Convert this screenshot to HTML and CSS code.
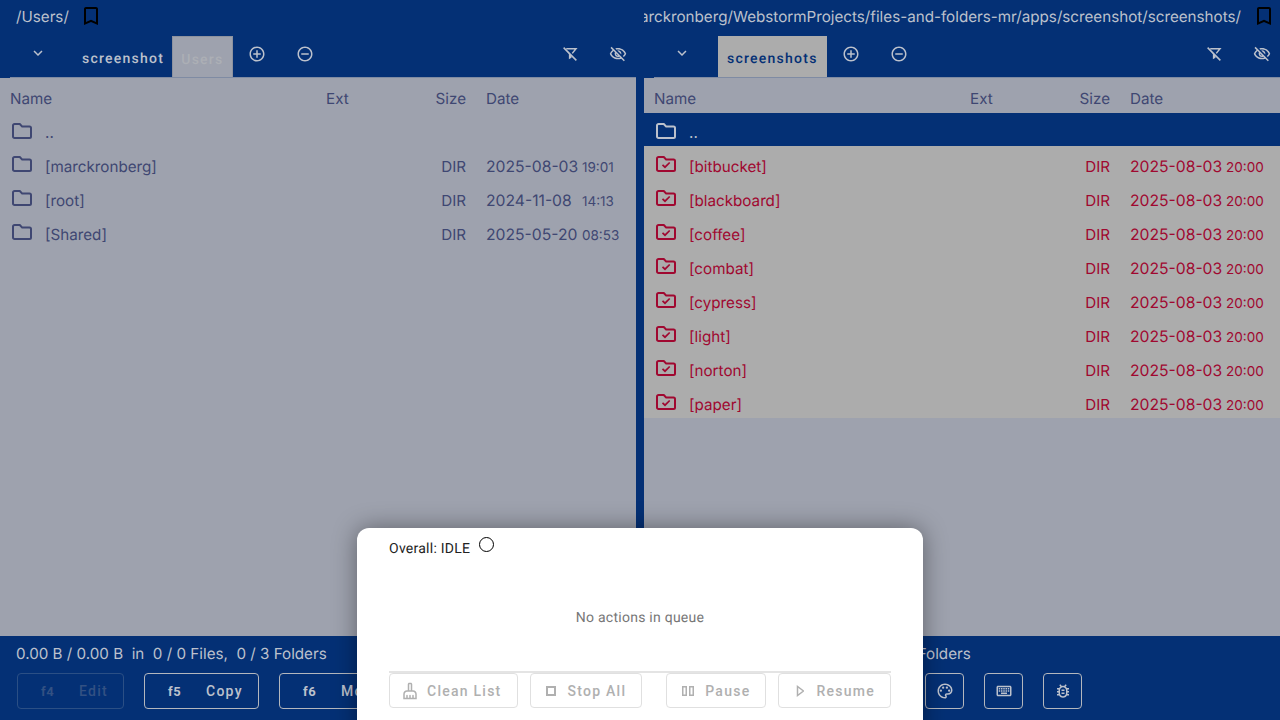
FILE: index.html
```html
<!DOCTYPE html>
<html lang="en">
<head>
  <meta charset="UTF-8">
  <title>Files and Folders</title>
  <link rel="stylesheet" href="styles.css">
</head>
<body>
  <svg class="defs" width="0" height="0">
    <symbol id="i-bookmark" viewBox="0 0 24 24"><path d="M17 3H7c-1.1 0-2 .9-2 2v16l7-3 7 3V5c0-1.1-.9-2-2-2zm0 15l-5-2.18L7 18V5h10v13z"/></symbol>
    <symbol id="i-chevron" viewBox="0 0 24 24"><path d="M16.59 8.59L12 13.17 7.41 8.59 6 10l6 6 6-6z"/></symbol>
    <symbol id="i-plus" viewBox="0 0 24 24"><path d="M13 7h-2v4H7v2h4v4h2v-4h4v-2h-4V7zm-1-5C6.48 2 2 6.48 2 12s4.48 10 10 10 10-4.48 10-10S17.52 2 12 2zm0 18c-4.41 0-8-3.59-8-8s3.59-8 8-8 8 3.59 8 8-3.59 8-8 8z"/></symbol>
    <symbol id="i-minus" viewBox="0 0 24 24"><path d="M7 11v2h10v-2H7zm5-9C6.48 2 2 6.48 2 12s4.48 10 10 10 10-4.48 10-10S17.52 2 12 2zm0 18c-4.41 0-8-3.59-8-8s3.59-8 8-8 8 3.59 8 8-3.59 8-8 8z"/></symbol>
    <symbol id="i-filter-off" viewBox="0 0 24 24"><path d="M7 5h13l-5 6.2" fill="none" stroke="currentColor" stroke-width="2"/><path d="M5 5l5.500 6.800V19l3.500-2v-3z"/><path d="M3.500 3.500l17 17" fill="none" stroke="currentColor" stroke-width="2"/></symbol>
    <symbol id="i-eye-off" viewBox="0 0 24 24"><path d="M12 6c3.79 0 7.17 2.13 8.82 5.5-.59 1.22-1.42 2.27-2.41 3.12l1.41 1.41c1.39-1.23 2.49-2.77 3.18-4.53C21.27 7.11 17 4 12 4c-1.27 0-2.49.2-3.64.57l1.65 1.65C10.66 6.09 11.32 6 12 6zm-1.07 1.14L13 9.21c.57.25 1.03.71 1.28 1.28l2.07 2.07c.08-.34.14-.7.14-1.07C16.5 9.01 14.48 7 12 7c-.37 0-.72.05-1.07.14zM2.01 3.87l2.68 2.68C3.06 7.83 1.77 9.53 1 11.5 2.73 15.89 7 19 12 19c1.52 0 2.98-.29 4.32-.82l3.42 3.42 1.41-1.41L3.42 2.45 2.01 3.87zm7.5 7.5l2.61 2.61c-.04.01-.08.02-.12.02-1.38 0-2.5-1.12-2.5-2.5 0-.05.01-.08.01-.13zm-3.4-3.4l1.75 1.75c-.23.55-.36 1.15-.36 1.78 0 2.48 2.02 4.5 4.5 4.5.63 0 1.23-.13 1.77-.36l.98.98c-.88.24-1.8.38-2.75.38-3.79 0-7.17-2.13-8.82-5.5.7-1.43 1.72-2.61 2.93-3.53z"/></symbol>
    <symbol id="i-folder" viewBox="0 0 22 18"><path d="M2 3.500C2 2.700 2.700 2 3.500 2h5.300l2.400 2.600h7.300c.8 0 1.500.7 1.500 1.500v8.400c0 .8-.7 1.500-1.500 1.500h-15C2.700 16 2 15.300 2 14.500z" fill="none" stroke="currentColor" stroke-width="2" stroke-linejoin="round"/></symbol>
    <symbol id="i-folder-check" viewBox="0 0 22 18"><path d="M2 3.500C2 2.700 2.700 2 3.500 2h5.300l2.400 2.600h7.300c.8 0 1.500.7 1.500 1.500v8.400c0 .8-.7 1.500-1.500 1.500h-15C2.700 16 2 15.300 2 14.500z" fill="none" stroke="currentColor" stroke-width="2" stroke-linejoin="round"/><path d="M7.500 9.800l2.500 2.400 4.700-4.700" fill="none" stroke="currentColor" stroke-width="1.700"/></symbol>
    <symbol id="i-palette" viewBox="0 0 24 24"><path d="M12 22C6.490 22 2 17.510 2 12S6.490 2 12 2s10 4.040 10 9c0 3.310-2.690 6-6 6h-1.770c-.28 0-.5.22-.5.5 0 .12.05.23.13.33.41.47.64 1.060.64 1.670 0 1.380-1.120 2.500-2.500 2.500zm0-18c-4.410 0-8 3.590-8 8s3.590 8 8 8c.28 0 .5-.22.5-.5 0-.16-.08-.28-.14-.35-.41-.46-.63-1.050-.63-1.650 0-1.380 1.120-2.500 2.500-2.500H16c2.210 0 4-1.790 4-4 0-3.860-3.590-7-8-7z"/><circle cx="6.500" cy="11.500" r="1.500"/><circle cx="9.500" cy="7.500" r="1.500"/><circle cx="14.500" cy="7.500" r="1.500"/><circle cx="17.500" cy="11.500" r="1.500"/></symbol>
    <symbol id="i-keyboard" viewBox="0 0 24 24"><path d="M20 7v10H4V7h16m0-2H4c-1.100 0-1.990.9-1.990 2L2 17c0 1.100.9 2 2 2h16c1.100 0 2-.9 2-2V7c0-1.100-.9-2-2-2zm-9 3h2v2h-2zm0 3h2v2h-2zM8 8h2v2H8zm0 3h2v2H8zm-3 0h2v2H5zm0-3h2v2H5zm3 6h8v2H8zm6-3h2v2h-2zm0-3h2v2h-2zm3 3h2v2h-2zm0-3h2v2h-2z"/></symbol>
    <symbol id="i-bug" viewBox="0 0 24 24"><path d="M20 8h-2.810c-.45-.78-1.070-1.450-1.820-1.960L17 4.410 15.590 3l-2.170 2.170C12.960 5.060 12.490 5 12 5c-.49 0-.96.06-1.410.17L8.410 3 7 4.410l1.620 1.630C7.880 6.550 7.260 7.220 6.810 8H4v2h2.090c-.05.33-.09.66-.09 1v1H4v2h2v1c0 .34.04.67.09 1H4v2h2.810c1.040 1.790 2.970 3 5.190 3s4.150-1.210 5.190-3H20v-2h-2.090c.05-.33.09-.66.09-1v-1h2v-2h-2v-1c0-.34-.04-.67-.09-1H20V8zm-4 7c0 2.210-1.790 4-4 4s-4-1.790-4-4v-4c0-2.210 1.790-4 4-4s4 1.790 4 4zm-6-1h4v2h-4zm0-4h4v2h-4z"/></symbol>
    <symbol id="i-broom" viewBox="0 0 24 24"><path d="M16 11h-1V3c0-1.100-.9-2-2-2h-2c-1.100 0-2 .9-2 2v8H8c-2.760 0-5 2.240-5 5v7h18v-7c0-2.760-2.240-5-5-5zm-5-8h2v8h-2V3zm8 18h-2v-3c0-.55-.45-1-1-1s-1 .45-1 1v3h-2v-3c0-.55-.45-1-1-1s-1 .45-1 1v3H9v-3c0-.55-.45-1-1-1s-1 .45-1 1v3H5v-5c0-1.650 1.350-3 3-3h8c1.650 0 3 1.350 3 3v5z"/></symbol>
  </svg>

  <div class="app">
    <div class="panes">

      <section class="pane">
        <div class="path-row">
          <span class="path">/Users/</span>
          <svg class="bookmark"><use href="#i-bookmark"/></svg>
        </div>
        <div class="tabs">
          <span class="tab-menu"><svg class="icon"><use href="#i-chevron"/></svg></span>
          <span class="tab">screenshot</span>
          <span class="tab tab-current">Users</span>
          <div class="tab-tools">
            <svg class="icon"><use href="#i-plus"/></svg>
            <svg class="icon"><use href="#i-minus"/></svg>
          </div>
          <div class="view-tools">
            <svg class="icon"><use href="#i-filter-off"/></svg>
            <svg class="icon"><use href="#i-eye-off"/></svg>
          </div>
        </div>
        <div class="list">
          <div class="row row-head"><span>Name</span><span>Ext</span><span class="size">Size</span><span class="date">Date</span></div>
          <div class="row row-up"><span class="name"><svg class="folder"><use href="#i-folder"/></svg>..</span></div>
          <div class="row"><span class="name"><svg class="folder"><use href="#i-folder"/></svg>[marckronberg]</span><span></span><span class="size">DIR</span><span class="date"><span class="day">2025-08-03</span><small>19:01</small></span></div>
          <div class="row"><span class="name"><svg class="folder"><use href="#i-folder"/></svg>[root]</span><span></span><span class="size">DIR</span><span class="date"><span class="day">2024-11-08</span><small>14:13</small></span></div>
          <div class="row"><span class="name"><svg class="folder"><use href="#i-folder"/></svg>[Shared]</span><span></span><span class="size">DIR</span><span class="date"><span class="day">2025-05-20</span><small>08:53</small></span></div>
        </div>
      </section>

      <section class="pane">
        <div class="path-row path-row-end">
          <span class="path">/Users/marckronberg/WebstormProjects/files-and-folders-mr/apps/screenshot/screenshots/</span>
          <svg class="bookmark"><use href="#i-bookmark"/></svg>
        </div>
        <div class="tabs">
          <span class="tab-menu"><svg class="icon"><use href="#i-chevron"/></svg></span>
          <span class="tab tab-active">screenshots</span>
          <div class="tab-tools">
            <svg class="icon"><use href="#i-plus"/></svg>
            <svg class="icon"><use href="#i-minus"/></svg>
          </div>
          <div class="view-tools">
            <svg class="icon"><use href="#i-filter-off"/></svg>
            <svg class="icon"><use href="#i-eye-off"/></svg>
          </div>
        </div>
        <div class="list">
          <div class="row row-head"><span>Name</span><span>Ext</span><span class="size">Size</span><span class="date">Date</span></div>
          <div class="row row-up row-cursor"><span class="name"><svg class="folder"><use href="#i-folder"/></svg>..</span></div>
          <div class="row row-picked"><span class="name"><svg class="folder"><use href="#i-folder-check"/></svg>[bitbucket]</span><span></span><span class="size">DIR</span><span class="date"><span class="day">2025-08-03</span><small>20:00</small></span></div>
          <div class="row row-picked"><span class="name"><svg class="folder"><use href="#i-folder-check"/></svg>[blackboard]</span><span></span><span class="size">DIR</span><span class="date"><span class="day">2025-08-03</span><small>20:00</small></span></div>
          <div class="row row-picked"><span class="name"><svg class="folder"><use href="#i-folder-check"/></svg>[coffee]</span><span></span><span class="size">DIR</span><span class="date"><span class="day">2025-08-03</span><small>20:00</small></span></div>
          <div class="row row-picked"><span class="name"><svg class="folder"><use href="#i-folder-check"/></svg>[combat]</span><span></span><span class="size">DIR</span><span class="date"><span class="day">2025-08-03</span><small>20:00</small></span></div>
          <div class="row row-picked"><span class="name"><svg class="folder"><use href="#i-folder-check"/></svg>[cypress]</span><span></span><span class="size">DIR</span><span class="date"><span class="day">2025-08-03</span><small>20:00</small></span></div>
          <div class="row row-picked"><span class="name"><svg class="folder"><use href="#i-folder-check"/></svg>[light]</span><span></span><span class="size">DIR</span><span class="date"><span class="day">2025-08-03</span><small>20:00</small></span></div>
          <div class="row row-picked"><span class="name"><svg class="folder"><use href="#i-folder-check"/></svg>[norton]</span><span></span><span class="size">DIR</span><span class="date"><span class="day">2025-08-03</span><small>20:00</small></span></div>
          <div class="row row-picked"><span class="name"><svg class="folder"><use href="#i-folder-check"/></svg>[paper]</span><span></span><span class="size">DIR</span><span class="date"><span class="day">2025-08-03</span><small>20:00</small></span></div>
        </div>
      </section>

    </div>

    <footer class="footer">
      <div class="stats">
        <span>0.00 B / 0.00 B &nbsp;in &nbsp;0 / 0 Files, &nbsp;0 / 3 Folders</span>
        <span>0.00 B / 0.00 B &nbsp;in &nbsp;0 / 0 Files, &nbsp;0 / 8 Folders</span>
      </div>
      <div class="actions">
        <button class="fkey" disabled><b>f4</b>Edit</button>
        <button class="fkey"><b>f5</b>Copy</button>
        <button class="fkey"><b>f6</b>Move</button>
        <div class="actions-end">
          <button class="tool"><svg class="icon"><use href="#i-palette"/></svg></button>
          <button class="tool"><svg class="icon"><use href="#i-keyboard"/></svg></button>
          <button class="tool"><svg class="icon"><use href="#i-bug"/></svg></button>
        </div>
      </div>
    </footer>

    <aside class="queue">
      <div class="queue-status">Overall: IDLE <span class="queue-dot"></span></div>
      <div class="queue-empty">No actions in queue</div>
      <div class="queue-actions">
        <button class="qbtn qbtn-clean"><svg class="icon"><use href="#i-broom"/></svg>Clean List</button>
        <button class="qbtn"><span class="q-stop"></span>Stop All</button>
        <button class="qbtn qbtn-pause"><svg class="q-pause" viewBox="0 0 12 10"><path d="M.75.75h3.500v8.500H.75zM7.750.75h3.500v8.500h-3.500z"/></svg>Pause</button>
        <button class="qbtn"><svg class="q-play" viewBox="0 0 10 12"><path d="M3.500 1.500v9l6-4.500z"/></svg>Resume</button>
      </div>
    </aside>
  </div>
</body>
</html>
```

FILE: styles.css
```css
* { box-sizing: border-box; }
html, body { margin: 0; height: 720px; overflow: hidden; }
html { text-rendering: geometricPrecision; }
body { background: #043075; color: #bcc1cc; font-family: Inter, "Liberation Sans", sans-serif; font-size: 15.200px; }
.defs { position: absolute; }
svg { fill: currentColor; display: block; }
.icon { width: 18px; height: 18px; }

.app { position: relative; height: 720px; display: flex; flex-direction: column; }
.panes { flex: 1; min-height: 0; display: grid; grid-template-columns: 636px 636px; column-gap: 8px; }
.pane { display: flex; flex-direction: column; overflow: hidden; min-width: 0; }

/* path line */
.path-row { height: 36px; flex: none; display: flex; align-items: center; gap: 10px; padding: 0 4px 4px 16px; }
.path-row-end { justify-content: flex-end; gap: 11px; }
.path { white-space: nowrap; flex: none; }
.bookmark { width: 24px; height: 24px; flex: none; color: #000; }

/* tabs */
.tabs { height: 42px; flex: none; margin-left: 10px; display: flex; border-bottom: 1px solid #7f8ba3; }
.tab-menu { width: 64px; flex: none; display: flex; padding: 8px 0 0 19px; }
.tab { height: 41px; padding: 5px 8px 0; display: flex; align-items: center; font-family: Roboto, sans-serif; font-weight: 500; font-size: 14px; letter-spacing: 1.25px; color: #bcc1cc; }
.tab-current { background: #9ea2ae; color: #acafb5; border: 1px solid #8d929f; border-bottom: 0; }
.tab-active { background: #acacac; color: #043075; padding: 5px 9px 0; }
.tab-tools { display: flex; gap: 30px; padding: 9px 0 0 15px; }
.view-tools { display: flex; gap: 30px; padding: 9px 9px 0 0; margin-left: auto; }

/* file list */
.list { flex: 1; background: #9ea2ae; color: #3f4772; }
.row { height: 34px; padding: 6px 0 0 10px; display: grid; grid-template-columns: 316px 80px 60px 1fr; align-items: center; white-space: nowrap; }
.row-head { height: 35px; }
.row-up { height: 33px; }
.row-cursor { background: #043075; color: #bcc1cc; }
.row-picked { background: #acacac; color: #a00830; }
.name { display: flex; align-items: center; }
.folder { width: 22px; height: 18px; margin: 0 12px 4px 1px; flex: none; }
.size { text-align: right; }
.date { padding-left: 20px; display: flex; align-items: baseline; }
.day { width: 96px; flex: none; font-size: 15.700px; }
small { font-size: 13.500px; }

/* footer */
.footer { height: 84px; flex: none; }
.stats { height: 37px; display: grid; grid-template-columns: 644px 1fr; padding: 8px 0 0 16px; white-space: nowrap; }
.actions { display: flex; gap: 20px; padding-left: 17px; }
button { font-family: Roboto, sans-serif; }
.fkey { width: 115px; height: 36px; padding: 0 0 0 23px; display: flex; align-items: center; background: none; border: 1px solid #b4b7bd; border-radius: 4px; color: #bcc1cc; font-weight: 500; font-size: 14px; letter-spacing: 1.250px; }
.fkey b { width: 38px; flex: none; font-size: 13px; text-align: left; letter-spacing: .5px; }
.fkey:disabled { width: 107px; border-color: #2b4f85; color: #335183; }
.actions-end { display: flex; gap: 20px; margin-left: auto; padding-right: 198px; }
.tool { width: 39px; height: 36px; padding: 0; display: flex; align-items: center; justify-content: center; background: none; border: 1px solid #b4b7bd; border-radius: 4px; color: #bcc1cc; }

/* queue sheet */
.queue { position: absolute; left: 357px; top: 528px; width: 566px; height: 212px; padding: 0 32px; background: #fff; border-radius: 12px 12px 0 0; box-shadow: 0 0 24px rgba(0, 0, 0, .4); font-family: Roboto, sans-serif; font-size: 14px; }
.queue-status { padding-top: 13px; height: 21px; line-height: 16px; color: #222; display: flex; gap: 9px; letter-spacing: .25px; }
.queue-dot { width: 15px; height: 15px; margin-top: -4px; border: 1.700px solid #000; border-radius: 50%; }
.queue-empty { margin-top: 61px; text-align: center; color: #777; letter-spacing: .25px; line-height: 16px; height: 16px; }
.queue-actions { margin-top: 45px; border-top: 2px solid #e4e4e4; display: flex; gap: 12px; }
.qbtn { height: 35px; padding: 0 15px; display: flex; align-items: center; gap: 12px; background: none; border: 1px solid #e0e0e0; border-radius: 4px; color: #b0b0b0; font-weight: 500; font-size: 14px; letter-spacing: 1.250px; white-space: nowrap; }
.qbtn-clean { padding-left: 11px; gap: 8px; }
.qbtn-pause { margin-left: 12px; gap: 11px; }
.q-stop { width: 10px; height: 10px; border: 2px solid #b0b0b0; }
.q-pause { width: 12px; height: 10px; fill: none; stroke: #b0b0b0; stroke-width: 1.500; }
.q-play { width: 10px; height: 12px; fill: none; stroke: #b0b0b0; stroke-width: 1.500; }
```
